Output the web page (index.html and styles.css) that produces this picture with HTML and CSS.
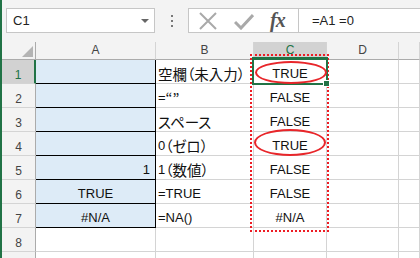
FILE: index.html
```html
<!DOCTYPE html>
<html lang="ja">
<head>
    <meta charset="UTF-8">
    <meta name="viewport" content="width=device-width, initial-scale=1.0">
    <title>Excel - 空欄の判定</title>
    <link rel="stylesheet" href="styles.css">
</head>
<body>
    <div class="app">
        <!-- 数式バー -->
        <div class="formula-bar">
            <div class="name-box">
                <span>C1</span>
                <span class="dropdown"></span>
            </div>
            <div class="grip"><i></i><i></i><i></i></div>
            <div class="fx-buttons">
                <svg width="20" height="18" viewBox="0 0 20 18"><path d="M2 1 L18 17 M18 1 L2 17" stroke="#a9a9a9" stroke-width="2" fill="none"/></svg>
                <svg width="20" height="18" viewBox="0 0 20 18"><path d="M1 10 L7 16 L19 3" stroke="#a9a9a9" stroke-width="3" fill="none"/></svg>
                <span class="fx">fx</span>
            </div>
            <div class="formula-input">=A1 =0</div>
        </div>

        <!-- シート -->
        <div class="sheet">
            <div class="grid">
                <div class="corner"><span></span></div>
                <div class="col-head">A</div>
                <div class="col-head">B</div>
                <div class="col-head active">C</div>
                <div class="col-head">D</div>
                <div class="col-head"></div>

                <div class="row-head active">1</div>
                <div class="cell blue"></div>
                <div class="cell"><span class="jp">空欄（未入力）</span></div>
                <div class="cell center">TRUE</div>
                <div class="cell"></div>
                <div class="cell"></div>

                <div class="row-head">2</div>
                <div class="cell blue"></div>
                <div class="cell">=<span class="jp">“”</span></div>
                <div class="cell center">FALSE</div>
                <div class="cell"></div>
                <div class="cell"></div>

                <div class="row-head">3</div>
                <div class="cell blue"></div>
                <div class="cell"><span class="jp">スペース</span></div>
                <div class="cell center">FALSE</div>
                <div class="cell"></div>
                <div class="cell"></div>

                <div class="row-head">4</div>
                <div class="cell blue"></div>
                <div class="cell">0<span class="jp">（ゼロ）</span></div>
                <div class="cell center">TRUE</div>
                <div class="cell"></div>
                <div class="cell"></div>

                <div class="row-head">5</div>
                <div class="cell blue right">1</div>
                <div class="cell">1<span class="jp">（数値）</span></div>
                <div class="cell center">FALSE</div>
                <div class="cell"></div>
                <div class="cell"></div>

                <div class="row-head">6</div>
                <div class="cell blue center">TRUE</div>
                <div class="cell">=TRUE</div>
                <div class="cell center">FALSE</div>
                <div class="cell"></div>
                <div class="cell"></div>

                <div class="row-head">7</div>
                <div class="cell blue center">#N/A</div>
                <div class="cell">=NA()</div>
                <div class="cell center">#N/A</div>
                <div class="cell"></div>
                <div class="cell"></div>

                <div class="row-head">8</div>
                <div class="cell"></div>
                <div class="cell"></div>
                <div class="cell"></div>
                <div class="cell"></div>
                <div class="cell"></div>

                <div class="row-head">9</div>
                <div class="cell"></div>
                <div class="cell"></div>
                <div class="cell"></div>
                <div class="cell"></div>
                <div class="cell"></div>
            </div>

            <!-- 重ねて描くもの -->
            <div class="copy-range"></div>
            <div class="selection"><span class="handle"></span></div>
            <div class="mark mark-1"></div>
            <div class="mark mark-4"></div>
        </div>
    </div>
</body>
</html>
```

FILE: styles.css
```css
body {
    margin: 0;
    padding: 0;
    font-family: "Liberation Sans", "Noto Sans CJK JP", sans-serif;
    background-color: #fff;
    overflow: hidden;
}
.app {
    width: 420px;
    height: 258px;
    border-left: 2px solid #217346;
    box-sizing: border-box;
    overflow: hidden;
}
.jp {
    font-family: "Noto Sans CJK JP", sans-serif;
    font-size: 14.5px;
    font-feature-settings: "palt";
}

/* 数式バー */
.formula-bar {
    height: 42px;
    background-color: #f3f3f3;
    display: flex;
    align-items: flex-start;
    padding-top: 8px;
    padding-left: 4px;
    box-sizing: border-box;
}
.name-box {
    width: 149px;
    height: 25px;
    background-color: #fff;
    border: 1px solid #c6c6c6;
    box-sizing: border-box;
    display: flex;
    align-items: center;
    justify-content: space-between;
    padding: 0 5px 0 6px;
    font-size: 13px;
    color: #222;
}
.dropdown {
    width: 0;
    height: 0;
    border-left: 4px solid transparent;
    border-right: 4px solid transparent;
    border-top: 4px solid #666;
}
.grip {
    width: 33px;
    height: 25px;
    display: flex;
    flex-direction: column;
    align-items: center;
    justify-content: center;
    gap: 3px;
}
.grip i {
    width: 2px;
    height: 2px;
    background-color: #777;
}
.fx-buttons {
    width: 111px;
    height: 25px;
    background-color: #fff;
    border: 1px solid #c6c6c6;
    box-sizing: border-box;
    display: flex;
    align-items: center;
    padding-left: 9px;
    gap: 16px;
}
.fx {
    font-family: "Liberation Serif", serif;
    font-style: italic;
    font-weight: bold;
    font-size: 20px;
    color: #555;
    letter-spacing: -1px;
}
.formula-input {
    flex: 1;
    height: 25px;
    background-color: #fff;
    border: 1px solid #c6c6c6;
    border-left: none;
    border-right: none;
    box-sizing: border-box;
    display: flex;
    align-items: center;
    padding-left: 13px;
    font-size: 13px;
    color: #222;
}

/* シート */
.sheet {
    position: relative;
}
.grid {
    display: grid;
    grid-template-columns: 34px 120px 98px 73px 72px 1fr;
    grid-template-rows: 18px;
    grid-auto-rows: 24px;
}
.corner, .col-head {
    background-color: #f3f3f3;
    border-right: 1px solid #d4d4d4;
    border-bottom: 1px solid #ababab;
    box-sizing: border-box;
}
.corner {
    border-right-color: #ababab;
    display: flex;
    align-items: flex-end;
    justify-content: flex-end;
    padding: 0 2px 2px 0;
}
.corner span {
    width: 0;
    height: 0;
    border-left: 11px solid transparent;
    border-bottom: 11px solid #b4b4b4;
}
.col-head {
    font-size: 12px;
    color: #444;
    text-align: center;
    line-height: 17px;
}
.col-head.active {
    background-color: #d2d2d2;
    color: #217346;
    border-bottom: 2px solid #217346;
}
.row-head {
    background-color: #f3f3f3;
    border-right: 1px solid #ababab;
    border-bottom: 1px solid #d4d4d4;
    box-sizing: border-box;
    font-size: 12px;
    color: #444;
    display: flex;
    align-items: flex-end;
    justify-content: center;
    padding-bottom: 1px;
}
.row-head.active {
    background-color: #d2d2d2;
    color: #217346;
    border-right: 2px solid #217346;
}
.cell {
    border-right: 1px solid #d4d4d4;
    border-bottom: 1px solid #d4d4d4;
    box-sizing: border-box;
    font-size: 13px;
    line-height: 15px;
    color: #111;
    display: flex;
    align-items: flex-end;
    padding: 0 2px 2px 2px;
    white-space: nowrap;
}
.cell.center {
    justify-content: center;
}
.cell.right {
    justify-content: flex-end;
    padding-right: 5px;
}
.cell.blue {
    background-color: #ddebf7;
    border-right-color: #000;
    border-bottom-color: #000;
}

/* 選択枠・コピー範囲・丸印 */
.copy-range {
    position: absolute;
    left: 248px;
    top: 12px;
    width: 79px;
    height: 178px;
    border: 2px dotted #ee1c24;
    box-sizing: border-box;
}
.selection {
    position: absolute;
    left: 250px;
    top: 15px;
    width: 76px;
    height: 28px;
    border: 2px solid #217346;
    box-sizing: border-box;
}
.handle {
    position: absolute;
    right: -4px;
    bottom: -4px;
    width: 5px;
    height: 5px;
    background-color: #217346;
    border: 1px solid #fff;
}
.mark {
    position: absolute;
    border: 2px solid #e8262a;
    border-radius: 50%;
    box-sizing: border-box;
}
.mark-1 {
    left: 253px;
    top: 19px;
    width: 72px;
    height: 23px;
}
.mark-4 {
    left: 252px;
    top: 87px;
    width: 72px;
    height: 27px;
}
```
